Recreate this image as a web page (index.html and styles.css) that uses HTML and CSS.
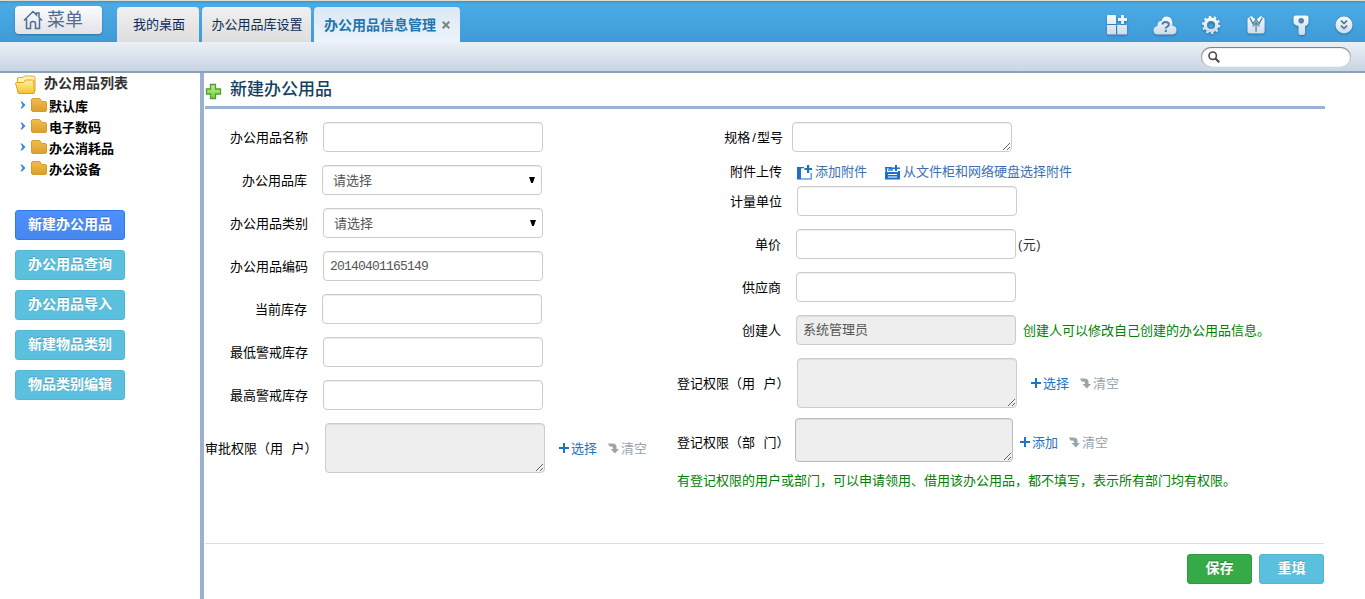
FILE: index.html
```
<!DOCTYPE html>
<html lang="zh-CN">
<head>
    <meta charset="UTF-8">
    <meta name="viewport" content="width=device-width, initial-scale=1.0">
    <title>办公用品信息管理</title>
    <link rel="stylesheet" href="styles.css">
</head>
<body>
    <!-- shared icon shapes -->
    <svg class="symbols" width="0" height="0">
        <defs>
            <linearGradient id="silver" x1="0" y1="0" x2="0" y2="1">
                <stop offset="0" stop-color="#f6fafd"/>
                <stop offset="1" stop-color="#cddbea"/>
            </linearGradient>
            <linearGradient id="gold" x1="0" y1="0" x2="0" y2="1">
                <stop offset="0" stop-color="#f0bc4c"/>
                <stop offset="1" stop-color="#dc9f2c"/>
            </linearGradient>
            <linearGradient id="yellow" x1="0" y1="0" x2="0" y2="1">
                <stop offset="0" stop-color="#fff6a8"/>
                <stop offset="1" stop-color="#fbc02c"/>
            </linearGradient>
            <linearGradient id="green" x1="0" y1="0" x2="0" y2="1">
                <stop offset="0" stop-color="#c3f08a"/>
                <stop offset="1" stop-color="#6fd03c"/>
            </linearGradient>
        </defs>
        <symbol id="arrow" viewBox="0 0 6 8"><path d="M0.5 0.5h1.5L5.5 4 2 7.5H0.5L2.5 4z" fill="#3a86dc"/></symbol>
        <symbol id="folder" viewBox="0 0 16 14">
            <path d="M0.5 2q0-1.500 1.500-1.500h6.500l2.500 3h3q1.500 0 1.500 1.500v7q0 1.500-1.500 1.500h-12q-1.500 0-1.500-1.500z" fill="url(#gold)" stroke="#d89b30"/>
        </symbol>
        <symbol id="plus" viewBox="0 0 10 10"><path d="M4 0h2v4h4v2H6v4H4V6H0V4h4z" fill="#1f72c4"/></symbol>
        <symbol id="clear" viewBox="0 0 11 11"><path d="M0 0.500h4.500Q8.500 0.500 8.500 4v2H11L6.800 10.500 2.500 6H5V5Q5 3.500 3.500 3.500H1.500z" fill="#98a4ae"/></symbol>
        <symbol id="down" viewBox="0 0 6 6"><path d="M0 0h6L3.800 6H2.200z" fill="#000"/></symbol>
    </svg>

    <header class="topbar">
        <a class="menu-btn" href="#">
            <svg width="20" height="20" viewBox="0 0 20 20" fill="none" stroke="#4f6d94" stroke-width="1.500"><path d="M1 10.500L10 1.500l3.500 3.500V3h2.500v4.500l3 3M3.500 9v9.500h4v-5q0-2 2.500-2t2.500 2v5h4V9"/></svg>
            <span>菜单</span>
        </a>
        <nav class="tabs">
            <a class="tab tab-home" href="#">我的桌面</a>
            <a class="tab tab-store" href="#">办公用品库设置</a>
            <a class="tab tab-active" href="#">办公用品信息管理
                <svg width="8" height="8" viewBox="0 0 8 8" stroke="#7a8580" stroke-width="2"><path d="M0.700 0.700l6.600 6.600M7.300 0.700L0.700 7.300"/></svg>
            </a>
        </nav>
        <div class="tools">
            <svg width="22" height="22" viewBox="0 0 22 22" fill="url(#silver)"><path d="M1 2q0-1 1-1h7q1 0 1 1v8H1zM1 11h9v9.500H2q-1 0-1-1zM11.200 11H21v8.500q0 1-1 1h-8.800zM15 1h3v3h3v3h-3v3h-3V7h-3V4h3z"/></svg>
            <svg width="24" height="22" viewBox="0.500 0 24 22"><path d="M5.500 20.500q-4.500 0-4.500-4t4-4.500q-.5-5 4-5Q10 2.500 14 2.500q5.500 0 6 6.500 0 2-.5 2.500 4.500 .500 4.500 4.500t-4 4.500z" fill="url(#silver)"/><path d="M10 10.500q0-2.500 3.200-2.500t3.200 2.600q0 1.400-1.700 2.100-1.400.7-1.400 1.800M13.300 15.800v2.200" fill="none" stroke="#4a7fa8" stroke-width="2"/></svg>
            <svg width="20" height="20" viewBox="0 -1 22 22"><circle cx="10" cy="10" r="8.800" fill="none" stroke="url(#silver)" stroke-width="2.600" stroke-dasharray="2.760 2.760"/><circle cx="10" cy="10" r="6" fill="none" stroke="url(#silver)" stroke-width="4.400"/><circle cx="10" cy="10" r="3.900" fill="none" stroke="#4a86b4" stroke-width="1.200"/></svg>
            <svg width="20" height="20" viewBox="0.500 0 21 21"><path d="M1.500 3.500L5 1l5 4 5-4 3.500 2.500q.5.500.5 2V17q0 2.500-2.500 2.500h-13Q1 19.500 1 17V5.500q0-1.500.5-2z" fill="url(#silver)"/><path d="M3.500 3l3.200 6L10 5l3.300 4 3.200-6M10 7.500v10M6.500 12L10 8l3.500 4" fill="none" stroke="#4a7f9e" stroke-width="1.300"/></svg>
            <svg width="18" height="22" viewBox="0 0 18 22"><path d="M3.500 1.500h11q2 0 2 2V8q0 3-3.500 4v7q0 2-2 2H8.500q-2 0-2-2v-7q-5-1-5-4V3.500q0-2 2-2z" fill="url(#silver)"/><circle cx="9.200" cy="6.800" r="2.800" fill="#4a86b4"/></svg>
            <svg width="18" height="18" viewBox="0 0 18 18"><circle cx="9" cy="9" r="8.500" fill="url(#silver)"/><path d="M6 4.700L9 7.500l3-2.800M6 9.700l3 2.800 3-2.800" fill="none" stroke="#4a7190" stroke-width="1.600"/></svg>
        </div>
    </header>

    <div class="subbar">
        <div class="search">
            <svg width="12" height="12" viewBox="0 0 12 12" fill="none" stroke="#4c4c4c"><circle cx="4.700" cy="4.700" r="3.700" stroke-width="1.600"/><path d="M7.500 7.500l3.700 3.700" stroke-width="2.200"/></svg>
            <input class="search-input" type="text">
        </div>
    </div>

    <div class="main">
        <aside class="sidebar">
            <div class="tree-title">
                <svg width="22" height="20" viewBox="0 0 22 20"><path d="M2.500 17V4q0-1.500 1.500-1.500h4L9.500 1H18q2 0 2 2v13z" fill="#fff3b0" stroke="#e7ab24"/><path d="M3.500 18.500L.6 8.500q-.1-1 1-1h7L10.600 5h7q1 0 1 1l.9 11q0 1.500-1.500 1.500z" fill="url(#yellow)" stroke="#e3a01c"/></svg>
                <span>办公用品列表</span>
            </div>
            <ul class="tree">
                <li><svg class="tree-arrow"><use href="#arrow"/></svg><svg class="tree-folder"><use href="#folder"/></svg><span>默认库</span></li>
                <li><svg class="tree-arrow"><use href="#arrow"/></svg><svg class="tree-folder"><use href="#folder"/></svg><span>电子数码</span></li>
                <li><svg class="tree-arrow"><use href="#arrow"/></svg><svg class="tree-folder"><use href="#folder"/></svg><span>办公消耗品</span></li>
                <li><svg class="tree-arrow"><use href="#arrow"/></svg><svg class="tree-folder"><use href="#folder"/></svg><span>办公设备</span></li>
            </ul>
            <div class="side-buttons">
                <button class="btn btn-primary">新建办公用品</button>
                <button class="btn">办公用品查询</button>
                <button class="btn">办公用品导入</button>
                <button class="btn">新建物品类别</button>
                <button class="btn">物品类别编辑</button>
            </div>
        </aside>

        <section class="content">
            <h1 class="title">
                <svg width="17" height="17" viewBox="0 0 17 17"><path d="M5.500 1.500h5v4.500h5v5h-5v4.500h-5V11h-4V6h4z" fill="url(#green)" stroke="#4f9e35" stroke-width="1.300"/></svg>
                <span>新建办公用品</span>
            </h1>

            <form class="form">
                <div class="col-left">
                    <div class="row">
                        <label class="label">办公用品名称</label>
                        <input class="field" type="text">
                    </div>
                    <div class="row">
                        <label class="label label-short">办公用品库</label>
                        <div class="field select">
                            <select><option>请选择</option></select>
                            <svg width="6" height="6"><use href="#down"/></svg>
                        </div>
                    </div>
                    <div class="row">
                        <label class="label">办公用品类别</label>
                        <div class="field select">
                            <select><option>请选择</option></select>
                            <svg width="6" height="6"><use href="#down"/></svg>
                        </div>
                    </div>
                    <div class="row">
                        <label class="label">办公用品编码</label>
                        <input class="field field-code" type="text" value="20140401165149">
                    </div>
                    <div class="row">
                        <label class="label label-short">当前库存</label>
                        <input class="field" type="text">
                    </div>
                    <div class="row">
                        <label class="label">最低警戒库存</label>
                        <input class="field" type="text">
                    </div>
                    <div class="row">
                        <label class="label">最高警戒库存</label>
                        <input class="field" type="text">
                    </div>
                    <div class="row">
                        <label class="label label-full">审批权限（用 户）</label>
                        <textarea class="field area" readonly></textarea>
                        <div class="links">
                            <a class="link" href="#"><svg width="10" height="10"><use href="#plus"/></svg>选择</a>
                            <a class="link link-clear" href="#"><svg width="11" height="11"><use href="#clear"/></svg>清空</a>
                        </div>
                    </div>
                </div>

                <div class="col-right">
                    <div class="row row-spec">
                        <label class="label label-spec">规格<span class="slash">/</span>型号</label>
                        <textarea class="field"></textarea>
                    </div>
                    <div class="row row-attach">
                        <label class="label">附件上传</label>
                        <a class="attach" href="#">
                            <svg width="15" height="15" viewBox="0 0 15 15" fill="#1f6fca"><path d="M0 2h7v1.200H4V13.500h9.700V8h1v6.500H0zM10 0h2.200v3H15v2h-2.800v3H10V5H7.500V3H10z"/></svg>添加附件
                        </a>
                        <a class="attach" href="#">
                            <svg width="15" height="15" viewBox="0 0 15 15" fill="#1f6fca"><path d="M0 2h7v1.500H2V7h11V6h2v8.500H0V7h.500zM10 0h2v2.500h3V4h-3v2h-2V4H4V2.500h6z"/><path d="M3 5h5M3 9.500h9M3 12h9" stroke="#fff" stroke-width="1.200"/><path d="M3 5h5" stroke="#1f6fca" stroke-width="1.400"/></svg>从文件柜和网络硬盘选择附件
                        </a>
                    </div>
                    <div class="row">
                        <label class="label">计量单位</label>
                        <input class="field" type="text">
                    </div>
                    <div class="row">
                        <label class="label label-short">单价</label>
                        <input class="field" type="text">
                        <span class="unit">(元)</span>
                    </div>
                    <div class="row">
                        <label class="label label-short">供应商</label>
                        <input class="field" type="text">
                    </div>
                    <div class="row">
                        <label class="label label-short">创建人</label>
                        <input class="field field-readonly" type="text" value="系统管理员" readonly>
                        <span class="hint">创建人可以修改自己创建的办公用品信息。</span>
                    </div>
                    <div class="row row-user">
                        <label class="label label-full">登记权限（用 户）</label>
                        <textarea class="field area" readonly></textarea>
                        <div class="links">
                            <a class="link" href="#"><svg width="10" height="10"><use href="#plus"/></svg>选择</a>
                            <a class="link link-clear" href="#"><svg width="11" height="11"><use href="#clear"/></svg>清空</a>
                        </div>
                    </div>
                    <div class="row row-dept">
                        <label class="label label-full">登记权限（部 门）</label>
                        <textarea class="field area area-dept" readonly></textarea>
                        <div class="links">
                            <a class="link" href="#"><svg width="10" height="10"><use href="#plus"/></svg>添加</a>
                            <a class="link link-clear" href="#"><svg width="11" height="11"><use href="#clear"/></svg>清空</a>
                        </div>
                    </div>
                    <p class="note">有登记权限的用户或部门，可以申请领用、借用该办公用品，都不填写，表示所有部门均有权限。</p>
                </div>
            </form>

            <div class="actions">
                <button class="btn btn-save">保存</button>
                <button class="btn btn-reset">重填</button>
            </div>
        </section>
    </div>
</body>
</html>
```
FILE: styles.css
```
* {
    box-sizing: border-box;
}

body {
    margin: 0;
    height: 599px;
    overflow: hidden;
    background: #fff;
    color: #000;
    font-family: "Liberation Sans", "Noto Sans CJK SC", sans-serif;
    font-size: 13px;
    line-height: 20px;
    display: flex;
    flex-direction: column;
}

a {
    text-decoration: none;
}

svg {
    flex: none;
}

.symbols {
    position: absolute;
}

/* top bar */
.topbar {
    height: 42px;
    flex: none;
    display: flex;
    border-top: 1px solid #dcdcd0;
    background: linear-gradient(#3d94cc, #4aabe5 3px, #3f9bd8);
}

.menu-btn {
    width: 87px;
    height: 28px;
    margin: 5px 0 0 15px;
    padding-left: 8px;
    display: flex;
    align-items: center;
    gap: 4px;
    border-radius: 4px;
    background: linear-gradient(#fbfcfd, #e0e3e8);
    box-shadow: 0 1px 2px #3a6c92;
    color: #4f6d94;
    font-size: 18px;
}

.tabs {
    display: flex;
    align-items: flex-end;
    gap: 3px;
    margin-left: 15px;
}

.tab {
    height: 35px;
    display: flex;
    align-items: center;
    justify-content: center;
    border-radius: 4px 4px 0 0;
    background: linear-gradient(#f0f0f0, #dedede);
    color: #0e2c55;
}

.tab-home {
    width: 82px;
    padding-left: 2px;
}

.tab-store {
    width: 109px;
    padding-left: 1px;
}

.tab-active {
    width: 146px;
    gap: 6px;
    background: linear-gradient(#dbe8f6, #edf3fa);
    color: #2176ae;
    font-size: 14px;
    font-weight: bold;
}

.tools {
    margin-left: auto;
    padding: 6px 12px 0 0;
    display: flex;
    align-items: center;
    gap: 25px;
    filter: drop-shadow(0 1px 1px #2c6f9f);
}

.subbar {
    height: 31px;
    flex: none;
    display: flex;
    justify-content: flex-end;
    padding: 5px 14px 0 0;
    background: linear-gradient(#ebf0f7, #c9d5e3);
    border-bottom: 2px solid #8da2b8;
}

.search {
    width: 150px;
    height: 20px;
    padding-left: 7px;
    display: flex;
    align-items: center;
    border-radius: 10px;
    background: #fff;
    box-shadow: inset 0 1px 1px #777, inset 1px 0 1px #aaa, inset -1px 0 1px #ccc;
}

.search-input {
    width: 115px;
    border: none;
    outline: none;
    background: none;
}

.main {
    flex: 1;
    display: flex;
}

/* left side */
.sidebar {
    width: 204px;
    flex: none;
    padding-left: 15px;
    border-right: 4px solid #9cb1d1;
}

.tree-title {
    height: 22px;
    display: flex;
    align-items: flex-start;
    gap: 7px;
    color: #333;
    font-size: 14px;
    font-weight: 600;
}

.tree-title svg {
    margin-top: 2px;
}

.tree {
    list-style: none;
    margin: 0;
    padding: 0 0 0 5px;
    font-weight: bold;
}

.tree li {
    height: 21px;
    display: flex;
    align-items: flex-start;
}

.tree span {
    padding-top: 2px;
    margin-left: 2px;
}

.tree-arrow {
    width: 6px;
    height: 8px;
    margin: 6px 5px 0 0;
}

.tree-folder {
    width: 16px;
    height: 14px;
    margin-top: 3px;
}

.side-buttons {
    display: flex;
    flex-direction: column;
    gap: 10px;
    margin-top: 31px;
}

.btn {
    width: 110px;
    height: 30px;
    padding: 0 0 2px;
    border: 1px solid #54b4d3;
    border-radius: 3px;
    background: #5bc0de;
    color: #fff;
    font-family: inherit;
    font-size: 14px;
    font-weight: bold;
    line-height: 20px;
    text-shadow: 0 -1px 0 rgba(0, 0, 0, 0.2);
}

.btn-primary {
    border-color: #3079ed;
    background: linear-gradient(#4d90fe, #4787ed);
}

/* form */
.content {
    flex: 1;
    padding: 0 41px 0 1px;
}

.title {
    height: 36px;
    margin: 0 -1px 0 0;
    display: flex;
    align-items: center;
    gap: 8px;
    border-bottom: 3px solid #9cb1d1;
    color: #15405f;
    font-size: 17px;
    font-weight: 500;
}

.title svg {
    margin-top: 3px;
}

.form {
    height: 435px;
    padding-top: 13px;
    display: flex;
    border-bottom: 1px solid #ddd;
}

.col-left {
    width: 472px;
    flex: none;
}

.row {
    display: flex;
    align-items: center;
    margin-bottom: 13px;
}

.label {
    width: 103px;
    margin-right: 15px;
    padding-top: 2px;
    flex: none;
    text-align: right;
    white-space: nowrap;
}

.label-short {
    width: 102px;
}

.field {
    display: block;
    width: 220px;
    height: 30px;
    flex: none;
    margin: 0;
    padding: 4px 6px;
    border: 1px solid #ccc;
    border-radius: 4px;
    outline: none;
    background: #fff;
    box-shadow: inset 0 1px 1px rgba(0, 0, 0, 0.075);
    color: #555;
    font-family: inherit;
    font-size: 13px;
    line-height: 20px;
}

.field-code {
    font-family: "Liberation Mono", monospace;
    letter-spacing: -0.8px;
}

.select {
    display: flex;
    align-items: center;
    padding: 0 6px 0 10px;
}

.select select {
    flex: 1;
    padding: 0;
    border: none;
    outline: none;
    appearance: none;
    background: none;
    color: #555;
    font-family: inherit;
    font-size: 13px;
}

.field-readonly,
.area {
    background: #eee;
}

.field-readonly {
    padding-bottom: 7px;
}

.area {
    height: 50px;
}

.area-dept {
    width: 218px;
    height: 44px;
    border-color: #bbb;
}

.label-full {
    width: 110px;
    margin-right: 10px;
    text-align: left;
    word-spacing: 5px;
}

.links {
    display: flex;
    gap: 11px;
    margin-left: 14px;
    padding-top: 2px;
}

.link {
    display: flex;
    align-items: center;
    gap: 2px;
    color: #1f72c4;
}

.link svg {
    margin-bottom: 2px;
}

.link-clear {
    color: #98a4ae;
}

.col-right .label {
    width: 105px;
}

.col-right .label-short {
    width: 104px;
}

.col-right .label-spec {
    width: 106px;
    margin-right: 9px;
}

.slash {
    padding: 0 1px 0 2px;
}

.row-spec {
    margin-bottom: 10px;
}

.row-attach {
    height: 20px;
    margin-bottom: 4px;
}

.row-attach .label {
    padding-top: 0;
}

.attach {
    display: flex;
    align-items: center;
    gap: 3px;
    margin-right: 18px;
    color: #3c70b4;
}

.unit {
    margin-left: 2px;
    padding-top: 2px;
    color: #333;
    letter-spacing: 0.5px;
}

.hint {
    margin-left: 7px;
    padding-top: 2px;
    color: #008000;
}

.row-user {
    margin-bottom: 10px;
}

.row-dept .links {
    margin-left: 7px;
    padding-top: 6px;
}

.col-right .label-full {
    width: 110px;
    margin-right: 10px;
}

.col-right .row-dept .label-full {
    margin-right: 8px;
    padding-top: 6px;
}

.note {
    margin: -4px 0 0;
    color: #008000;
    white-space: nowrap;
}

.actions {
    display: flex;
    justify-content: flex-end;
    gap: 7px;
    padding-top: 10px;
}

.btn-save,
.btn-reset {
    width: 65px;
}

.btn-save {
    border-color: #319a40;
    background: #35aa47;
}
```
